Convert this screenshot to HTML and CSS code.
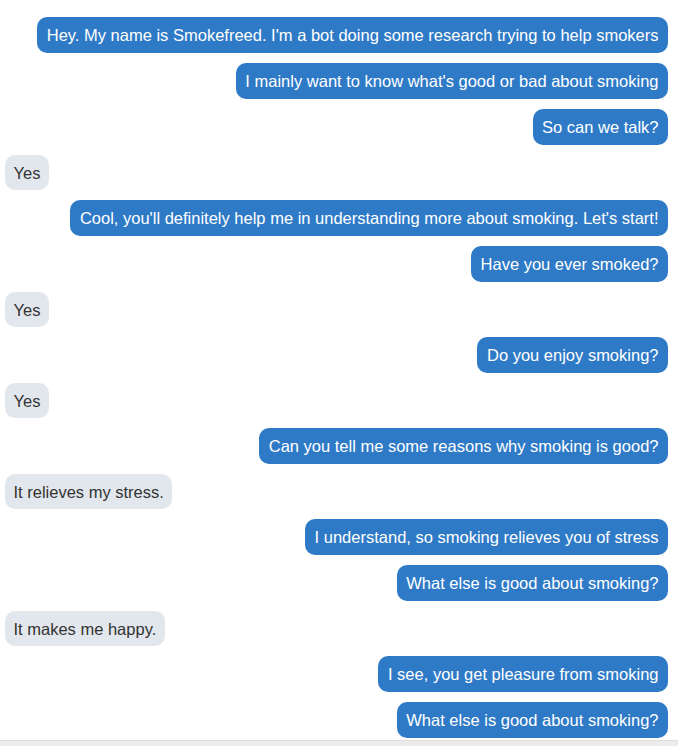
FILE: index.html
```html
<!DOCTYPE html>
<html lang="en">
<head>
  <meta charset="UTF-8">
  <title>Smokefreed chat</title>
  <link rel="stylesheet" href="styles.css">
</head>
<body>
  <div class="chat">
    <div class="msg bot">Hey. My name is Smokefreed. I'm a bot doing some research trying to help smokers</div>
    <div class="msg bot">I mainly want to know what's good or bad about smoking</div>
    <div class="msg bot">So can we talk?</div>
    <div class="msg user">Yes</div>
    <div class="msg bot">Cool, you'll definitely help me in understanding more about smoking. Let's start!</div>
    <div class="msg bot">Have you ever smoked?</div>
    <div class="msg user">Yes</div>
    <div class="msg bot">Do you enjoy smoking?</div>
    <div class="msg user">Yes</div>
    <div class="msg bot">Can you tell me some reasons why smoking is good?</div>
    <div class="msg user">It relieves my stress.</div>
    <div class="msg bot">I understand, so smoking relieves you of stress</div>
    <div class="msg bot">What else is good about smoking?</div>
    <div class="msg user">It makes me happy.</div>
    <div class="msg bot">I see, you get pleasure from smoking</div>
    <div class="msg bot">What else is good about smoking?</div>
  </div>
  <!-- barra de entrada, casi fuera de la vista -->
  <div class="input-bar"></div>
</body>
</html>
```

FILE: styles.css
```css
body {
  font-family: "Liberation Sans", Arial, sans-serif;
  margin: 0;
  height: 100vh;
  display: flex;
  flex-direction: column;
  background-color: #fff;
  overflow: hidden;
}
.chat {
  flex: 1;
  display: flex;
  flex-direction: column;
  gap: 10px;
  padding: 17px 10px 0 5px;
  overflow: hidden;
}
.msg {
  font-size: 16.5px;
  line-height: 18px;
  padding: 9px 9.5px;
  border-radius: 10px;
  max-width: 97%;
  box-sizing: border-box;
  white-space: nowrap;
}
.bot {
  align-self: flex-end;
  background-color: #2f7ac6;
  color: white;
}
.user {
  align-self: flex-start;
  background-color: #e2e7ed;
  color: #333;
  padding: 8.5px 8.5px;
}
.input-bar {
  height: 5px;
  background-color: #ececec;
  border-top: 1px solid #dcdcdc;
}
```
